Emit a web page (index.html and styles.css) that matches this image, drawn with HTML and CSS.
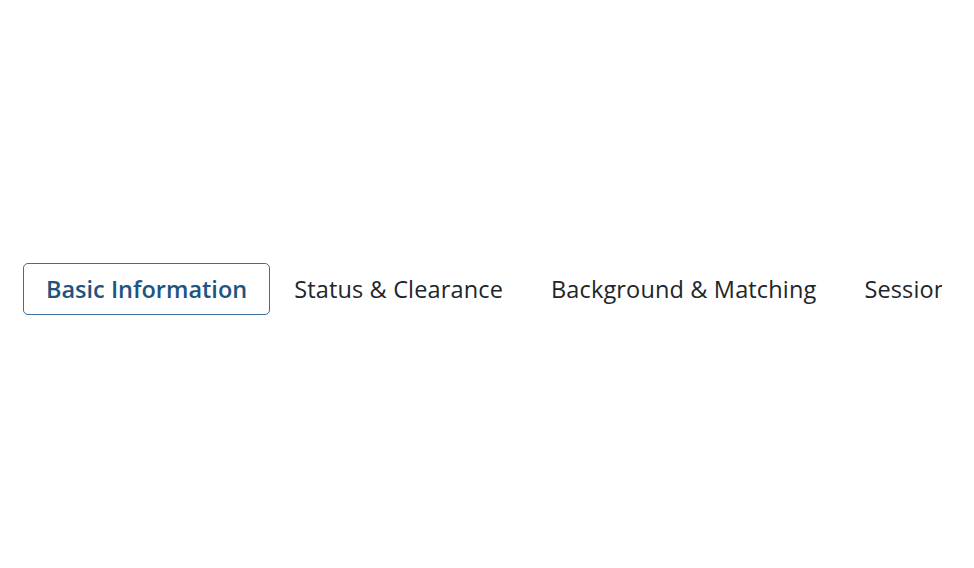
FILE: index.html
```html
<!DOCTYPE html>
<html lang="en">
<head>
<meta charset="utf-8">
<title>Tabs</title>
<link rel="stylesheet" href="styles.css">
</head>
<body>
<main class="page">
  <nav class="tabs">
    <button class="tab tab-active">Basic Information</button>
    <button class="tab">Status &amp; Clearance</button>
    <button class="tab">Background &amp; Matching</button>
    <button class="tab">Session Details</button>
    <button class="tab">Notes</button>
  </nav>
</main>
</body>
</html>
```
FILE: styles.css
```css
html, body {
  margin: 0;
  padding: 0;
  background: #ffffff;
}
.page {
  padding-top: 263px;
  padding-left: 23px;
}
.tabs {
  display: flex;
  flex-wrap: nowrap;
  width: 919px;
  overflow: hidden;
  white-space: nowrap;
}
.tab {
  flex: 0 0 auto;
  box-sizing: border-box;
  height: 52px;
  padding: 0 23px 1px;
  border: 1px solid transparent;
  border-radius: 5px;
  background: transparent;
  font-family: "Open Sans", "Noto Sans", sans-serif;
  font-size: 23.5px;
  font-weight: 400;
  letter-spacing: 0.15px;
  color: #212529;
  cursor: pointer;
}
.tab-active {
  padding: 0 22px 1px;
  border-color: #3a6f9e;
  color: #1d5482;
  font-weight: 600;
  letter-spacing: 0;
}
```
